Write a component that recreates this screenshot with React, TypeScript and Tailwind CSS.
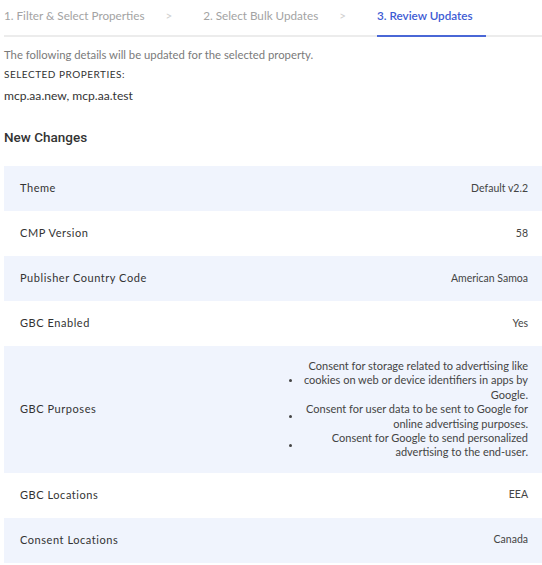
import React from "react";

type Row = { label: string; value: React.ReactNode };

const purposes = [
  "Consent for storage related to advertising like cookies on web or device identifiers in apps by Google.",
  "Consent for user data to be sent to Google for online advertising purposes.",
  "Consent for Google to send personalized advertising to the end-user.",
];

function PurposeList() {
  return (
    <ul className="flex flex-col text-[11px]">
      {purposes.map((p) => (
        <li key={p} className="flex items-center gap-[10px]">
          <span className="w-[3px] h-[3px] rounded-full bg-[#444]" />
          <span className="w-[226px] text-right leading-[14.4px]">{p}</span>
        </li>
      ))}
    </ul>
  );
}

const rows: Row[] = [
  { label: "Theme", value: "Default v2.2" },
  { label: "CMP Version", value: "58" },
  { label: "Publisher Country Code", value: "American Samoa" },
  { label: "GBC Enabled", value: "Yes" },
  { label: "GBC Purposes", value: <PurposeList /> },
  { label: "GBC Locations", value: "EEA" },
  { label: "Consent Locations", value: "Canada" },
];

function Tabs() {
  return (
    <div className="flex items-start border-b-2 border-[#ececec] text-[11.7px] text-[#a3a3a3]">
      <div className="h-[35px] pt-[7px] pr-[13px] -mb-[2px]">1. Filter &amp; Select Properties</div>
      <span className="pt-[7px] ml-[8px] mr-[31px] text-[#cfcfcf]">&gt;</span>
      <div className="h-[35px] pt-[7px] pr-[13px] -mb-[2px]">2. Select Bulk Updates</div>
      <span className="pt-[7px] ml-[8px] mr-[31px] text-[#cfcfcf]">&gt;</span>
      <div className="h-[37px] pt-[7px] pr-[13px] -mb-[2px] border-b-2 border-[#4a67d6] text-[#3d5bd4] font-semibold">
        3. Review Updates
      </div>
    </div>
  );
}

export default function App() {
  return (
    <div
      className="w-[542px] min-h-[565px] bg-white pl-[4px] text-[#444]"
      style={{ fontFamily: 'Lato, "Noto Sans", sans-serif' }}
    >
      <Tabs />
      <p className="mt-[10px] text-[11.3px] leading-[16px] text-[#7a7a7a]">
        The following details will be updated for the selected property.
      </p>
      <p className="mt-[4px] text-[10px] leading-[14px] tracking-[0.5px] text-[#333]">SELECTED PROPERTIES:</p>
      <p className="mt-[7px] text-[12.1px] leading-[16px] text-[#333]">mcp.aa.new, mcp.aa.test</p>
      <h2
        className="mt-[24px] text-[13.5px] leading-[18px] font-medium text-[#333]"
        style={{ fontFamily: "Roboto, Arial, sans-serif" }}
      >
        New Changes
      </h2>
      <div className="mt-[20px] flex flex-col">
        {rows.map((r, i) => (
          <div
            key={r.label}
            className={`flex items-center justify-between pl-[16px] pr-[14px] min-h-[45px] ${
              r.label === "GBC Purposes" ? "py-[13px]" : ""
            } ${i % 2 === 0 ? "bg-[#f0f4fd]" : "bg-white"}`}
          >
            <span className="text-[11px] tracking-[0.55px] text-[#333]">{r.label}</span>
            <div className="text-[10.5px] text-[#444]">{r.value}</div>
          </div>
        ))}
      </div>
    </div>
  );
}
